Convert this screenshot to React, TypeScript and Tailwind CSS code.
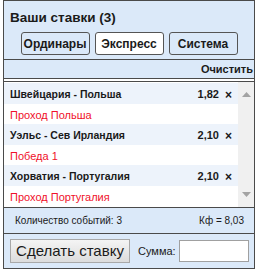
import React from "react"

const bets = [
  { match: "Швейцария - Польша", odd: "1,82", pick: "Проход Польша" },
  { match: "Уэльс - Сев Ирландия", odd: "2,10", pick: "Победа 1" },
  { match: "Хорватия - Португалия", odd: "2,10", pick: "Проход Португалия" },
]

const font = "font-['Liberation_Sans',Arial,sans-serif]"

export default function App() {
  return (
    <div className="min-h-[270px] w-[258px] bg-white">
      <div className={`ml-[3px] flex h-[269px] w-[252px] flex-col border border-[#4a4a4a] text-[#1a1a1a] ${font}`}>
        <div className="flex h-[58px] flex-col bg-[#dbe9f9] px-[6px] pt-[9px]">
          <div className="text-[13.5px] font-bold leading-[16px]">Ваши ставки (3)</div>
          <div className="mt-[6px] flex justify-center gap-[5px]">
            <button className="h-[23px] w-[69px] rounded-[3px] border border-[#555] bg-[#dbe9f9] text-[12px] font-bold">Ординары</button>
            <button className="h-[23px] w-[69px] rounded-[3px] border border-[#555] bg-white text-[12px] font-bold">Экспресс</button>
            <button className="h-[23px] w-[69px] rounded-[3px] border border-[#555] bg-[#dbe9f9] text-[12px] font-bold">Система</button>
          </div>
        </div>
        <div className="flex h-[20px] items-center justify-end border-y border-[#4a4a4a] bg-[#dbe9f9] pr-[1px] text-[11px] font-bold">
          Очистить
        </div>
        <div className="mt-[2px] flex h-[127px] border-y border-[#4a4a4a] bg-white">
          <div className="flex-1 pt-[1px]">
            {bets.map((b) => (
              <div key={b.match}>
                <div className="flex h-[21px] items-center bg-[#edf3fb] pl-[6px] pr-[6px] pt-[2px] text-[10.5px] font-bold">
                  <span className="flex-1">{b.match}</span>
                  <span className="text-[11px]">{b.odd}</span>
                  <span className="ml-[6px] text-[12px]">×</span>
                </div>
                <div className="flex h-[20px] items-center pl-[6px] pt-[3px] text-[11px] text-[#f0102a]">{b.pick}</div>
              </div>
            ))}
          </div>
          <div className="flex w-[16px] flex-col items-center justify-between bg-[#f0f0f0] py-[10px]">
            <svg width="9" height="5" viewBox="0 0 9 5"><path d="M0 5 L4.5 0 L9 5 Z" fill="#a3a3a3" /></svg>
            <svg width="9" height="5" viewBox="0 0 9 5"><path d="M0 0 L4.5 5 L9 0 Z" fill="#a3a3a3" /></svg>
          </div>
        </div>
        <div className="flex h-[25px] items-center justify-between bg-[#dbe9f9] pl-[11px] pr-[10px] text-[10px]">
          <span>Количество событий: 3</span>
          <span>Кф = 8,03</span>
        </div>
        <div className="flex flex-1 items-center border-t border-[#4a4a4a] bg-[#dbe9f9] pl-[6px] pr-[5px]">
          <button className="h-[24px] w-[120px] shrink-0 border border-[#a8a8a8] bg-gradient-to-b from-[#f4f4f4] to-[#dcdcdc] text-[15px] leading-[20px]">
            Сделать ставку
          </button>
          <span className="ml-[8px] text-[11px]">Сумма:</span>
          <input className="ml-auto h-[22px] w-[70px] min-w-0 shrink-0 border border-[#a0a0a0] bg-white" />
        </div>
      </div>
    </div>
  )
}
